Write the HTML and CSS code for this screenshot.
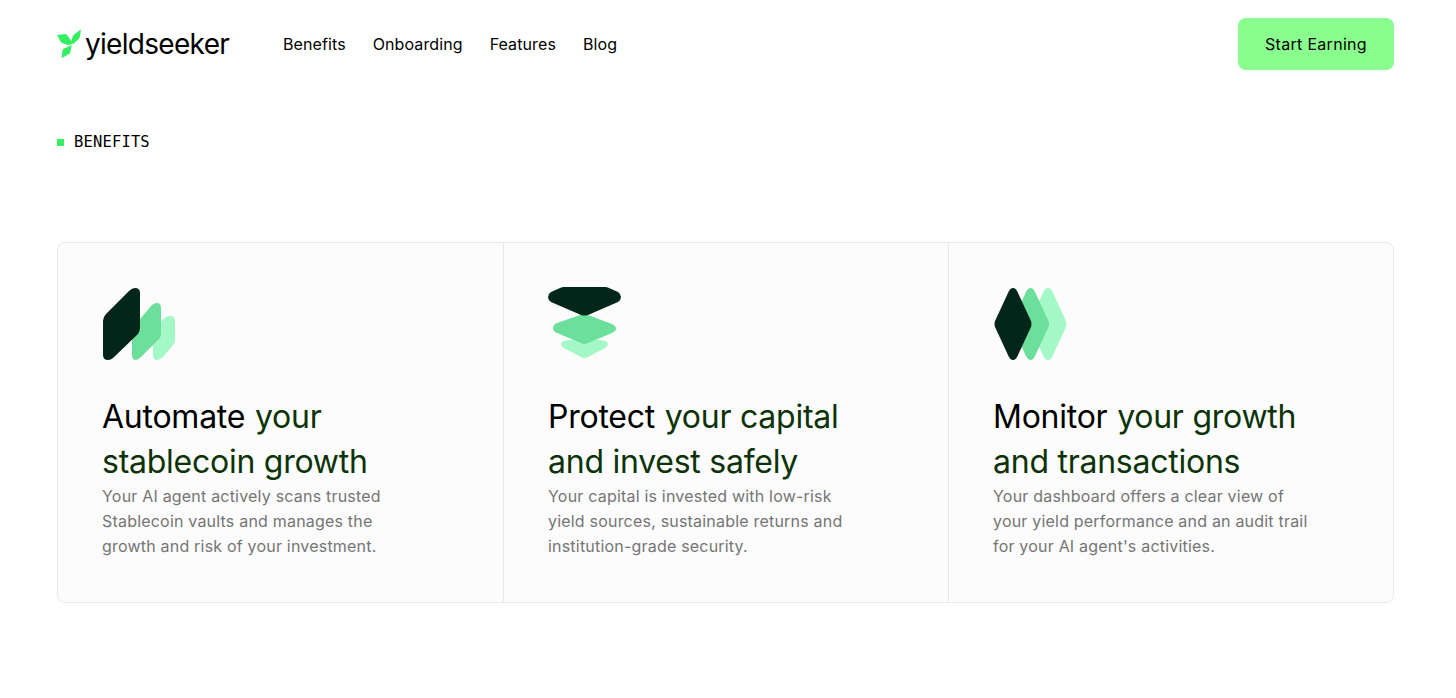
FILE: index.html
```html
<!DOCTYPE html>
<html lang="en">
<head>
    <meta charset="UTF-8">
    <title>Yieldseeker</title>
    <link rel="stylesheet" href="styles.css">
</head>
<body>

    <header class="topbar">
        <a class="logo" href="#">
            <svg class="logo-mark" width="26" height="30" viewBox="0 0 26 30">
                <path class="leaf" d="M0 6 L8 5 Q9 5 10 6 L15.7 14 L14.5 15 Q13 16 11 16 L5 14 Q4 13.5 3.7 12.7 Z"/>
                <path class="leaf" d="M24 0.3 L22.8 8 Q22.5 9.3 21.5 10.2 L16.3 15 L14.2 14 Q13.7 13.7 14 13 L16 6.8 Q16.3 6 17 5.5 Z"/>
                <path class="leaf" d="M14.7 16 L13.4 23 Q13 24.3 12 25 L4.7 29.3 L5.5 21.5 Q5.7 20.3 6.7 19.8 Z"/>
            </svg>
            <span class="logo-text">yieldseeker</span>
        </a>
        <nav class="nav">
            <a href="#">Benefits</a>
            <a href="#">Onboarding</a>
            <a href="#">Features</a>
            <a href="#">Blog</a>
        </nav>
        <a class="cta" href="#">Start Earning</a>
    </header>

    <section class="benefits">
        <div class="eyebrow"><span class="eyebrow-dot"></span>BENEFITS</div>

        <div class="cards">
            <article class="card">
                <svg class="card-icon" width="74" height="73" viewBox="0 0 74 73">
                    <path class="shade-light" transform="translate(1 0)" d="M50 44 Q50 41 52 39 L62 29.5 Q64 28 67 28 Q72 28 72 33 L72 52 Q72 55 70 57 L60 69 Q57 72 54 72 Q50 72 50 67 Z"/>
                    <path class="shade-mid" transform="translate(1 0)" d="M29 43 Q29 40 31 38 L49 17 Q51 15 54 15 Q58 15 58 20 L58 46 Q58 49 56 51 L38 69 Q35 72 33 72 Q29 72 29 67 Z"/>
                    <path class="shade-dark" d="M1 33 Q1 29 4 26 L27 3 Q30 0 33 0 Q38 0 38 5 L38 40 Q38 43 36 46 L11 70 Q9 72 6 72 Q1 72 1 67 Z"/>
                </svg>
                <h2 class="card-title"><span class="lead">Automate</span> your stablecoin growth</h2>
                <p class="card-text">Your AI agent actively scans trusted Stablecoin vaults and manages the growth and risk of your investment.</p>
            </article>

            <article class="card">
                <svg class="card-icon" width="74" height="73" viewBox="0 1 74 73">
                    <path class="shade-light" transform="translate(0 1)" d="M13 56 Q13 54 16 53 L33 50 Q36 50 40 50 L57 53 Q60 54 60 56 Q60 58 57 60 L40 69 Q36 71 33 69 L16 60 Q13 58 13 56 Z"/>
                    <path class="shade-mid" d="M5 41 Q5 38 9 36 L32 28 Q36 26 40 28 L64 37 Q68 39 68 42 Q68 44 64 46 L40 56 Q36 58 33 56 L9 46 Q5 44 5 41 Z"/>
                    <path class="shade-dark" d="M0 10 Q0 7 3 5 L12 1 Q14 0 16 0 L57 0 Q59 0 61 1 L70 5 Q73 7 73 10 Q73 13 70 15 L40 28 Q36 29 33 28 L3 15 Q0 13 0 10 Z"/>
                </svg>
                <h2 class="card-title"><span class="lead">Protect</span> your capital and invest safely</h2>
                <p class="card-text">Your capital is invested with low-risk yield sources, sustainable returns and institution-grade security.</p>
            </article>

            <article class="card">
                <svg class="card-icon" width="74" height="73" viewBox="0 0 74 73">
                    <path class="shade-light" transform="translate(35 0)" d="M2 33 L15 5 Q17 0 20 0 Q23 0 25 5 L38 33 Q39 36 38 39 L25 67 Q23 72 20 72 Q17 72 15 67 L2 39 Q1 36 2 33 Z"/>
                    <path class="shade-mid" transform="translate(17.5 0)" d="M2 33 L15 5 Q17 0 20 0 Q23 0 25 5 L38 33 Q39 36 38 39 L25 67 Q23 72 20 72 Q17 72 15 67 L2 39 Q1 36 2 33 Z"/>
                    <path class="shade-dark" d="M2 33 L15 5 Q17 0 20 0 Q23 0 25 5 L38 33 Q39 36 38 39 L25 67 Q23 72 20 72 Q17 72 15 67 L2 39 Q1 36 2 33 Z"/>
                </svg>
                <h2 class="card-title"><span class="lead">Monitor</span> your growth and transactions</h2>
                <p class="card-text">Your dashboard offers a clear view of your yield performance and an audit trail for your AI agent's activities.</p>
            </article>
        </div>
    </section>

</body>
</html>
```

FILE: styles.css
```css
body {
    margin: 0;
    background-color: #fff;
    color: #000;
    font-family: Inter, "Liberation Sans", sans-serif;
}

a {
    color: inherit;
    text-decoration: none;
}

.topbar {
    display: flex;
    align-items: center;
    height: 88px;
    padding: 0 62px 0 57px;
}

.logo {
    display: flex;
    align-items: center;
    width: 226px;
}

.logo-mark {
    flex-shrink: 0;
    margin-right: 2px;
}

.leaf {
    fill: #35ee62;
}

.logo-text {
    font-size: 28px;
    letter-spacing: -0.7px;
    line-height: 32px;
}

.nav {
    display: flex;
    gap: 27px;
    font-size: 16px;
    letter-spacing: 0.1px;
}

.cta {
    margin-left: auto;
    width: 156px;
    height: 52px;
    display: flex;
    justify-content: center;
    align-items: center;
    border-radius: 8px;
    background-color: #89fd8d;
    font-size: 16px;
    letter-spacing: 0.3px;
}

.benefits {
    padding: 0 62px 0 57px;
}

.eyebrow {
    display: flex;
    align-items: center;
    margin-top: 44px;
    height: 20px;
    font-family: "DejaVu Sans Mono", monospace;
    font-size: 15.5px;
    letter-spacing: 0.15px;
}

.eyebrow-dot {
    width: 7px;
    height: 7px;
    margin-right: 10px;
    background-color: #35ee62;
}

.cards {
    display: grid;
    grid-template-columns: repeat(3, 1fr);
    margin-top: 90px;
    border: 1px solid #e9e9e9;
    border-radius: 8px;
    background-color: #fcfcfc;
}

.card {
    height: 359px;
    padding: 45px 44px;
    box-sizing: border-box;
    border-left: 1px solid #e9e9e9;
}

.card:first-child {
    border-left: none;
}

.card-icon {
    display: block;
    overflow: visible;
}

.shade-dark { fill: #03261a; }
.shade-mid { fill: #6ddf9d; }
.shade-light { fill: #a4f8c6; }

.card-title {
    margin: 33px 0 0;
    max-width: 320px;
    font-size: 32px;
    font-weight: 400;
    line-height: 45px;
    letter-spacing: -0.25px;
    color: #0b3307;
}

.lead {
    margin-right: 1px;
    color: #000;
}

.card-text {
    margin: 0;
    max-width: 322px;
    font-size: 16px;
    line-height: 25px;
    letter-spacing: 0.2px;
    color: #757575;
}
```
